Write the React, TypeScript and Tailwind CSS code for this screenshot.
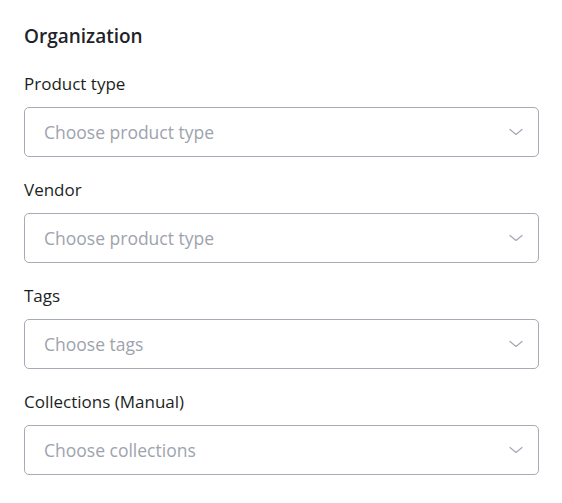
import React from "react";

const fields = [
  { label: "Product type", placeholder: "Choose product type" },
  { label: "Vendor", placeholder: "Choose product type" },
  { label: "Tags", placeholder: "Choose tags" },
  { label: "Collections (Manual)", placeholder: "Choose collections" },
];

function Chevron() {
  return (
    <svg width="14" height="8" viewBox="0 0 14 8" fill="none" className="shrink-0">
      <path d="M1 1.5L7 6.5L13 1.5" stroke="#a3a8b3" strokeWidth="1.2" strokeLinecap="round" strokeLinejoin="round" />
    </svg>
  );
}

export default function App() {
  return (
    <div className="w-[562px] h-[503px] bg-white pl-6 pr-[23px] pt-[22px]" style={{ fontFamily: '"Open Sans", "Noto Sans", sans-serif' }}>
      <h2 className="text-[19px] leading-7 font-semibold text-[#1f2329] mb-[22px]">Organization</h2>
      <div className="flex flex-col gap-[21px]">
        {fields.map((f, i) => (
          <div key={i} className="flex flex-col">
            <label className="text-[17px] leading-6 text-[#1c1f23] mb-[11px]">{f.label}</label>
            <div className="h-[50px] border border-[#a6abb5] rounded-[5px] flex items-center justify-between pl-[19px] pr-[15px]">
              <span className="text-[17.5px] text-[#9ea3ad]">{f.placeholder}</span>
              <Chevron />
            </div>
          </div>
        ))}
      </div>
    </div>
  );
}
